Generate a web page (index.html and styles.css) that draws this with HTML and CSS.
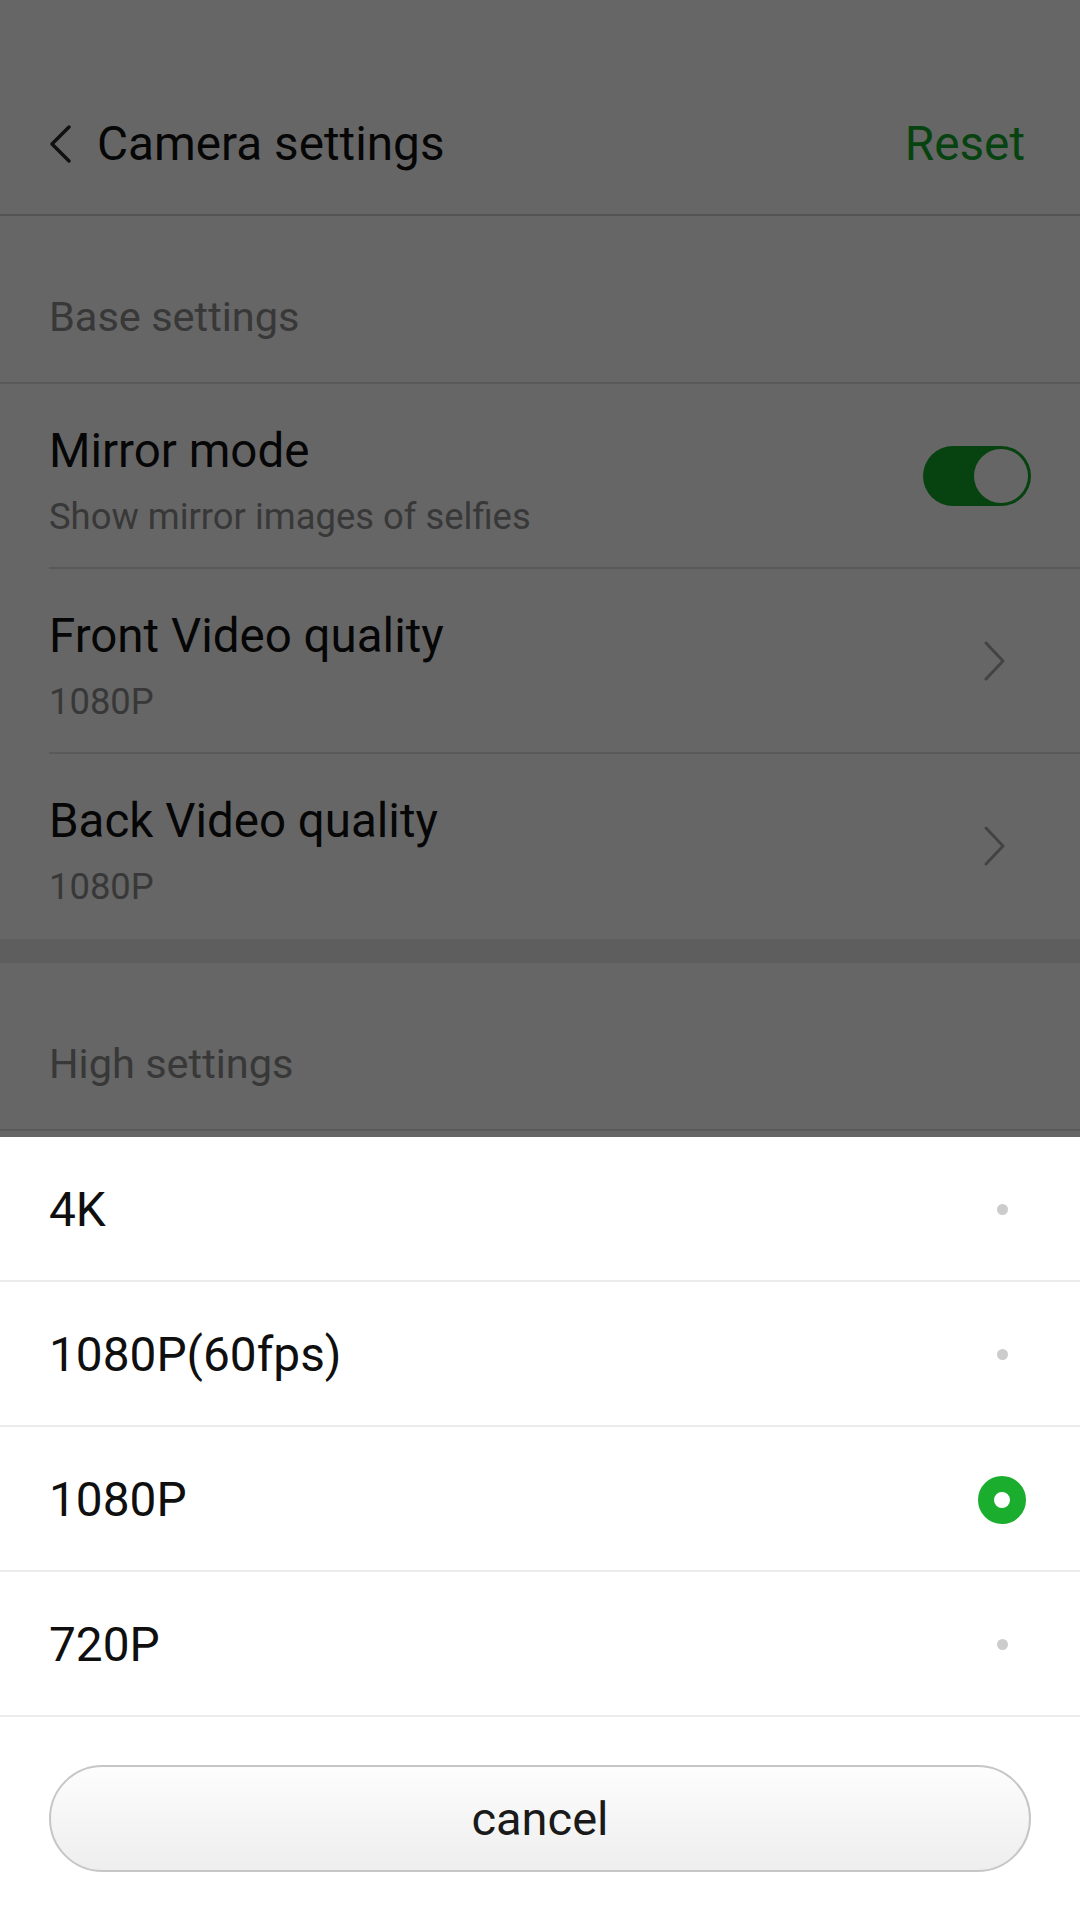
FILE: index.html
```html
<!DOCTYPE html>
<html lang="en">
<head>
  <meta charset="UTF-8">
  <meta name="viewport" content="width=device-width, initial-scale=1.0">
  <title>Camera settings</title>
  <link rel="stylesheet" href="styles.css">
</head>
<body>
  <div class="screen">
    <header class="topbar">
      <svg class="back-icon" width="24" height="38" viewBox="0 0 24 38">
        <polyline points="21,2 4,19 21,36" fill="none" stroke="#2a2a2a" stroke-width="3.4" stroke-linecap="round" stroke-linejoin="round"/>
      </svg>
      <div class="page-title">Camera settings</div>
      <div class="reset">Reset</div>
    </header>

    <div class="section-title">Base settings</div>

    <div class="group">
      <div class="item">
        <div class="item-text">
          <div class="item-title">Mirror mode</div>
          <div class="item-sub">Show mirror images of selfies</div>
        </div>
        <div class="toggle on"><span class="knob"></span></div>
      </div>
      <div class="item">
        <div class="item-text">
          <div class="item-title">Front Video quality</div>
          <div class="item-sub">1080P</div>
        </div>
        <svg class="chevron" width="22" height="40" viewBox="0 0 22 40">
          <polyline points="2,2 19,20 2,38" fill="none" stroke="#a8a8a8" stroke-width="3" stroke-linecap="round" stroke-linejoin="round"/>
        </svg>
      </div>
      <div class="item last">
        <div class="item-text">
          <div class="item-title">Back Video quality</div>
          <div class="item-sub">1080P</div>
        </div>
        <svg class="chevron" width="22" height="40" viewBox="0 0 22 40">
          <polyline points="2,2 19,20 2,38" fill="none" stroke="#a8a8a8" stroke-width="3" stroke-linecap="round" stroke-linejoin="round"/>
        </svg>
      </div>
    </div>

    <div class="group-gap"></div>

    <div class="section-title">High settings</div>
  </div>

  <div class="dim"></div>

  <div class="sheet">
    <div class="option">
      <span>4K</span>
      <span class="radio"><span class="dot"></span></span>
    </div>
    <div class="option">
      <span>1080P(60fps)</span>
      <span class="radio"><span class="dot"></span></span>
    </div>
    <div class="option">
      <span>1080P</span>
      <span class="radio"><span class="selected"></span></span>
    </div>
    <div class="option">
      <span>720P</span>
      <span class="radio"><span class="dot"></span></span>
    </div>
    <button class="cancel-button">cancel</button>
  </div>
</body>
</html>
```

FILE: styles.css
```css
:root {
  --miui-green: #12a828;
  --text-main: #0f0f0f;
  --text-muted: #8c8c8c;
  --line: #dedede;
  --sheet-line: #ebebeb;
}

html, body {
  margin: 0;
  padding: 0;
}

body {
  width: 1080px;
  height: 1920px;
  overflow: hidden;
  background: #ffffff;
  font-family: Roboto, "Noto Sans", sans-serif;
  color: var(--text-main);
}

.screen {
  width: 1080px;
}

.topbar {
  height: 216px;
  box-sizing: border-box;
  display: flex;
  align-items: center;
  padding: 74px 55px 0 48px;
  border-bottom: 2px solid #d2d2d2;
}

.back-icon {
  margin-right: 25px;
  flex-shrink: 0;
}

.page-title {
  flex: 1;
  font-size: 47.7px;
  line-height: 56px;
}

.reset {
  font-size: 47.7px;
  line-height: 56px;
  color: var(--miui-green);
}

.section-title {
  height: 168px;
  box-sizing: border-box;
  display: flex;
  align-items: flex-end;
  padding: 0 0 41px 49px;
  font-size: 41.5px;
  line-height: 48px;
  color: var(--text-muted);
  border-bottom: 2px solid var(--line);
}

.item {
  display: flex;
  align-items: center;
  margin-left: 49px;
  padding: 39px 49px 26px 0;
  border-bottom: 2px solid var(--line);
}

.item.last {
  border-bottom: none;
  padding-bottom: 28px;
}

.item-text {
  flex: 1;
}

.item-title {
  font-size: 47.5px;
  line-height: 56px;
}

.item-sub {
  margin-top: 14px;
  font-size: 36.4px;
  line-height: 48px;
  color: var(--text-muted);
}

.toggle {
  width: 108px;
  height: 60px;
  box-sizing: border-box;
  border-radius: 30px;
  background: var(--miui-green);
  display: flex;
  align-items: center;
  justify-content: flex-end;
  padding: 0 3px;
  margin-bottom: 13px;
}

.knob {
  width: 54px;
  height: 54px;
  border-radius: 50%;
  background: #ffffff;
}

.chevron {
  margin-right: 25px;
  margin-bottom: 13px;
}

.group-gap {
  height: 24px;
  background: #ececec;
}

.dim {
  position: fixed;
  inset: 0;
  background: rgba(0, 0, 0, 0.6);
}

.sheet {
  position: fixed;
  left: 0;
  right: 0;
  bottom: 0;
  height: 783px;
  background: #ffffff;
}

.option {
  height: 145px;
  box-sizing: border-box;
  display: flex;
  align-items: center;
  justify-content: space-between;
  padding: 2px 54px 0 49px;
  font-size: 47.8px;
  border-bottom: 2px solid var(--sheet-line);
}

.radio {
  width: 48px;
  height: 48px;
  display: flex;
  align-items: center;
  justify-content: center;
}

.dot {
  width: 11px;
  height: 11px;
  border-radius: 50%;
  background: #cccccc;
}

.selected {
  width: 48px;
  height: 48px;
  box-sizing: border-box;
  border-radius: 50%;
  border: 16px solid #1aad2e;
  background: #ffffff;
}

.cancel-button {
  display: block;
  width: 982px;
  height: 107px;
  margin: 48px 49px 0;
  border: 2px solid #c6c6c6;
  border-radius: 54px;
  background: linear-gradient(#fdfdfd, #eeeeee);
  font-family: Roboto, "Noto Sans", sans-serif;
  font-size: 47px;
  color: #1a1a1a;
  padding: 0;
}
```
